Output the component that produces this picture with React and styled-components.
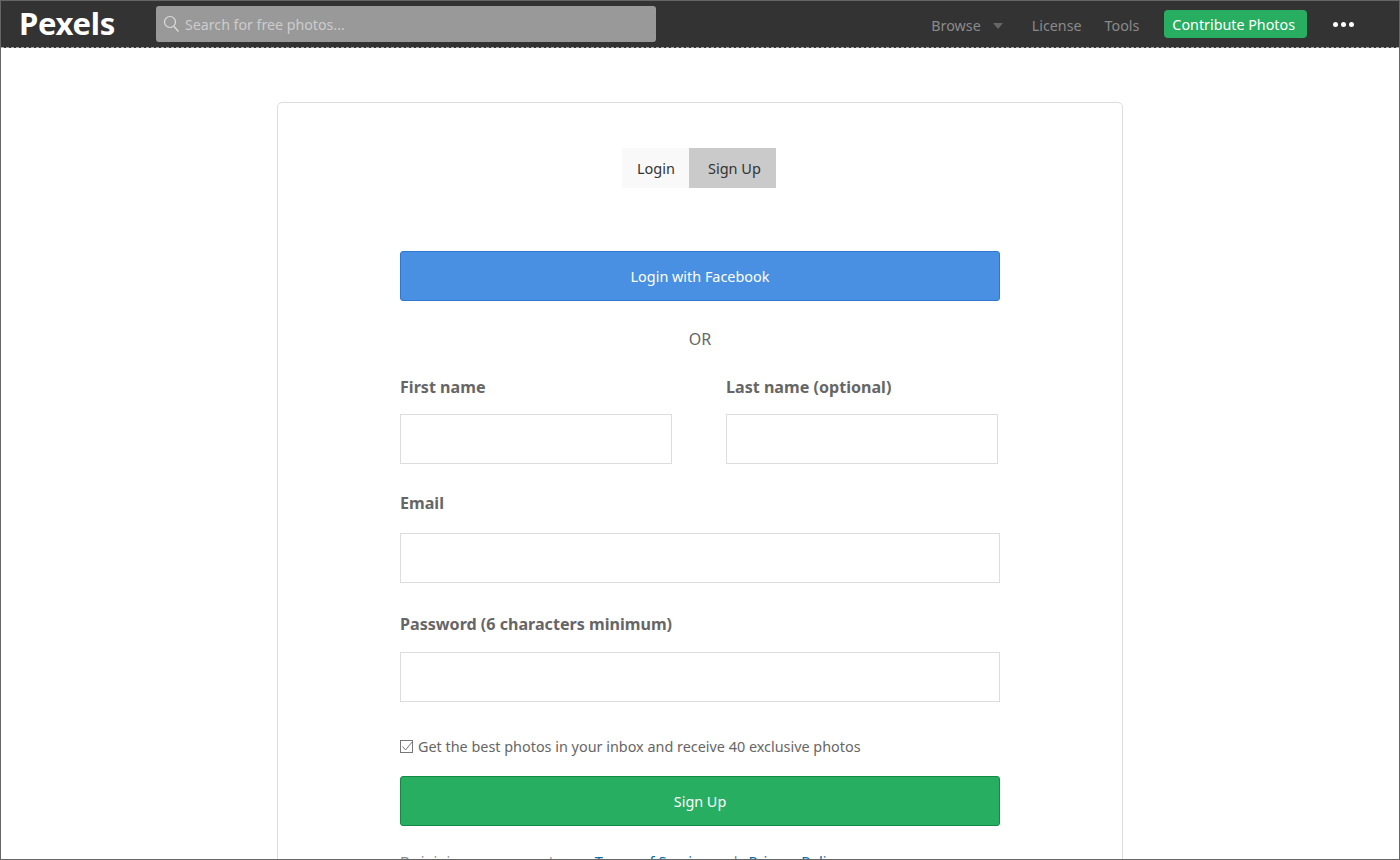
import React from "react";
import styled, { createGlobalStyle } from "styled-components";

const Global = createGlobalStyle`
  html, body { margin: 0; padding: 0; height: 100%; overflow: hidden; background: #fff; }
  * { box-sizing: border-box; }
  body { font-family: "Noto Sans", "Open Sans", "Liberation Sans", sans-serif; color: #666; }
`;

const Frame = styled.div`
  height: 860px;
  overflow: hidden;
  border: 1px solid #666;
  background: #fff;
  display: flex;
  flex-direction: column;
`;
const Header = styled.header`
  flex: none;
  height: 47px;
  background: #333;
  border-bottom: 1px dashed #aaa;
  display: flex;
  align-items: center;
  padding: 0 45px 0 18px;
`;
const Logo = styled.div`
  width: 137px;
  color: #fff;
  font-size: 31px;
  font-weight: 700;
  letter-spacing: -0.3px;
  line-height: 46px;
  padding-bottom: 2px;
`;
const Search = styled.div`
  width: 500px;
  height: 36px;
  background: #999;
  border-radius: 3px;
  display: flex;
  align-items: center;
  gap: 5px;
  padding-left: 7px;
  color: #ccc;
  font-size: 14.2px;
`;
const Nav = styled.nav`
  margin-left: auto;
  display: flex;
  align-items: center;
  color: #8a8a8a;
  font-size: 14.3px;
  line-height: 20px;
  padding-top: 3px;
`;
const NavItem = styled.span`
  margin-left: ${(p) => p.$gap}px;
`;
const Caret = styled.span`
  width: 0;
  height: 0;
  margin-left: 12px;
  border-left: 5px solid transparent;
  border-right: 5px solid transparent;
  border-top: 6px solid #666;
`;
const Contribute = styled.span`
  margin-left: 25px;
  height: 28px;
  margin-top: -3px;
  padding: 2px 12px 0 8px;
  border-radius: 4px;
  background: #27ae60;
  color: #fff;
  display: flex;
  align-items: center;
  font-size: 14.3px;
`;
const Dots = styled.span`
  margin-left: 26px;
  margin-top: -3px;
  display: flex;
  gap: 3px;
  i { width: 5px; height: 5px; border-radius: 50%; background: #fff; display: block; }
`;
const Main = styled.main`
  flex: 1;
  display: flex;
  justify-content: center;
  padding-top: 54px;
`;
const Card = styled.section`
  width: 846px;
  height: 900px;
  flex: none;
  border: 1px solid #ddd;
  border-radius: 5px;
  padding: 45px 122px 0;
`;
const Tabs = styled.div`
  display: flex;
  justify-content: center;
  margin-bottom: 63px;
`;
const TabGroup = styled.div`
  display: flex;
  margin-left: -2px;
`;
const Tab = styled.div`
  height: 40px;
  width: ${(p) => p.$w}px;
  padding-left: ${(p) => p.$pl}px;
  background: ${(p) => (p.$active ? "#cacaca" : "#f9f9f9")};
  color: #333;
  font-size: 14.5px;
  display: flex;
  align-items: center;
`;
const Button = styled.div`
  width: 600px;
  height: 50px;
  border-radius: 3px;
  border: 1px solid ${(p) => p.$edge};
  background: ${(p) => p.$bg};
  color: #fff;
  font-size: 14.4px;
  display: flex;
  align-items: center;
  justify-content: center;
`;
const Or = styled.div`
  text-align: center;
  font-size: 16px;
  line-height: 22px;
  margin: 27px 0 26px;
  color: #666;
`;
const Row = styled.div`
  display: grid;
  grid-template-columns: 272px 272px;
  column-gap: 54px;
`;
const Field = styled.div`
  margin-bottom: ${(p) => p.$mb}px;
`;
const Label = styled.div`
  font-size: 16.1px;
  font-weight: 700;
  line-height: 22px;
  color: #666;
  margin-bottom: ${(p) => p.$mb}px;
`;
const Input = styled.div`
  height: 50px;
  border: 1px solid #ddd;
  background: #fff;
`;
const Check = styled.div`
  display: flex;
  align-items: center;
  gap: 4px;
  font-size: 14.4px;
  line-height: 20px;
  color: #666;
  margin: 35px 0 19px;
`;
const Legal = styled.div`
  margin-top: 25px;
  font-size: 14.7px;
  line-height: 20px;
  color: #888;
  a { color: #0a6ea8; text-decoration: none; }
  a + a { margin-left: 7px; }
`;

export default function App() {
  return (
    <Frame>
      <Global />
      <Header>
        <Logo>Pexels</Logo>
        <Search>
          <svg width="17" height="18" viewBox="0 0 17 18" fill="none" stroke="#ddd" strokeWidth="1.2">
            <circle cx="7" cy="7" r="5.5" />
            <path d="M11 11.5 L15.5 16.5" />
          </svg>
          Search for free photos...
        </Search>
        <Nav>
          <span>Browse</span>
          <Caret />
          <NavItem $gap={29}>License</NavItem>
          <NavItem $gap={23}>Tools</NavItem>
          <Contribute>Contribute Photos</Contribute>
          <Dots><i /><i /><i /></Dots>
        </Nav>
      </Header>
      <Main>
        <Card>
          <Tabs>
            <TabGroup>
              <Tab $w={67} $pl={15}>Login</Tab>
              <Tab $w={87} $pl={19} $active>Sign Up</Tab>
            </TabGroup>
          </Tabs>
          <Button $bg="#4a90e2" $edge="#2f78d2">Login with Facebook</Button>
          <Or>OR</Or>
          <Row>
            <Field $mb={28}>
              <Label $mb={16}>First name</Label>
              <Input />
            </Field>
            <Field $mb={28}>
              <Label $mb={16}>Last name (optional)</Label>
              <Input />
            </Field>
          </Row>
          <Field $mb={30}>
            <Label $mb={19}>Email</Label>
            <Input />
          </Field>
          <Field>
            <Label $mb={17}>Password (6 characters minimum)</Label>
            <Input />
          </Field>
          <Check>
            <svg width="14" height="14" viewBox="0 0 14 14" fill="none" stroke="#777">
              <rect x="0.5" y="0.5" width="12" height="12" />
              <path d="M2.5 6.5 L5.5 10 L12.5 1.5" />
            </svg>
            Get the best photos in your inbox and receive 40 exclusive photos
          </Check>
          <Button $bg="#27ae60" $edge="#128a45">Sign Up</Button>
          <Legal>By joining, you agree to our <a>Terms of Service</a> and <a>Privacy Policy</a>.</Legal>
        </Card>
      </Main>
    </Frame>
  );
}
